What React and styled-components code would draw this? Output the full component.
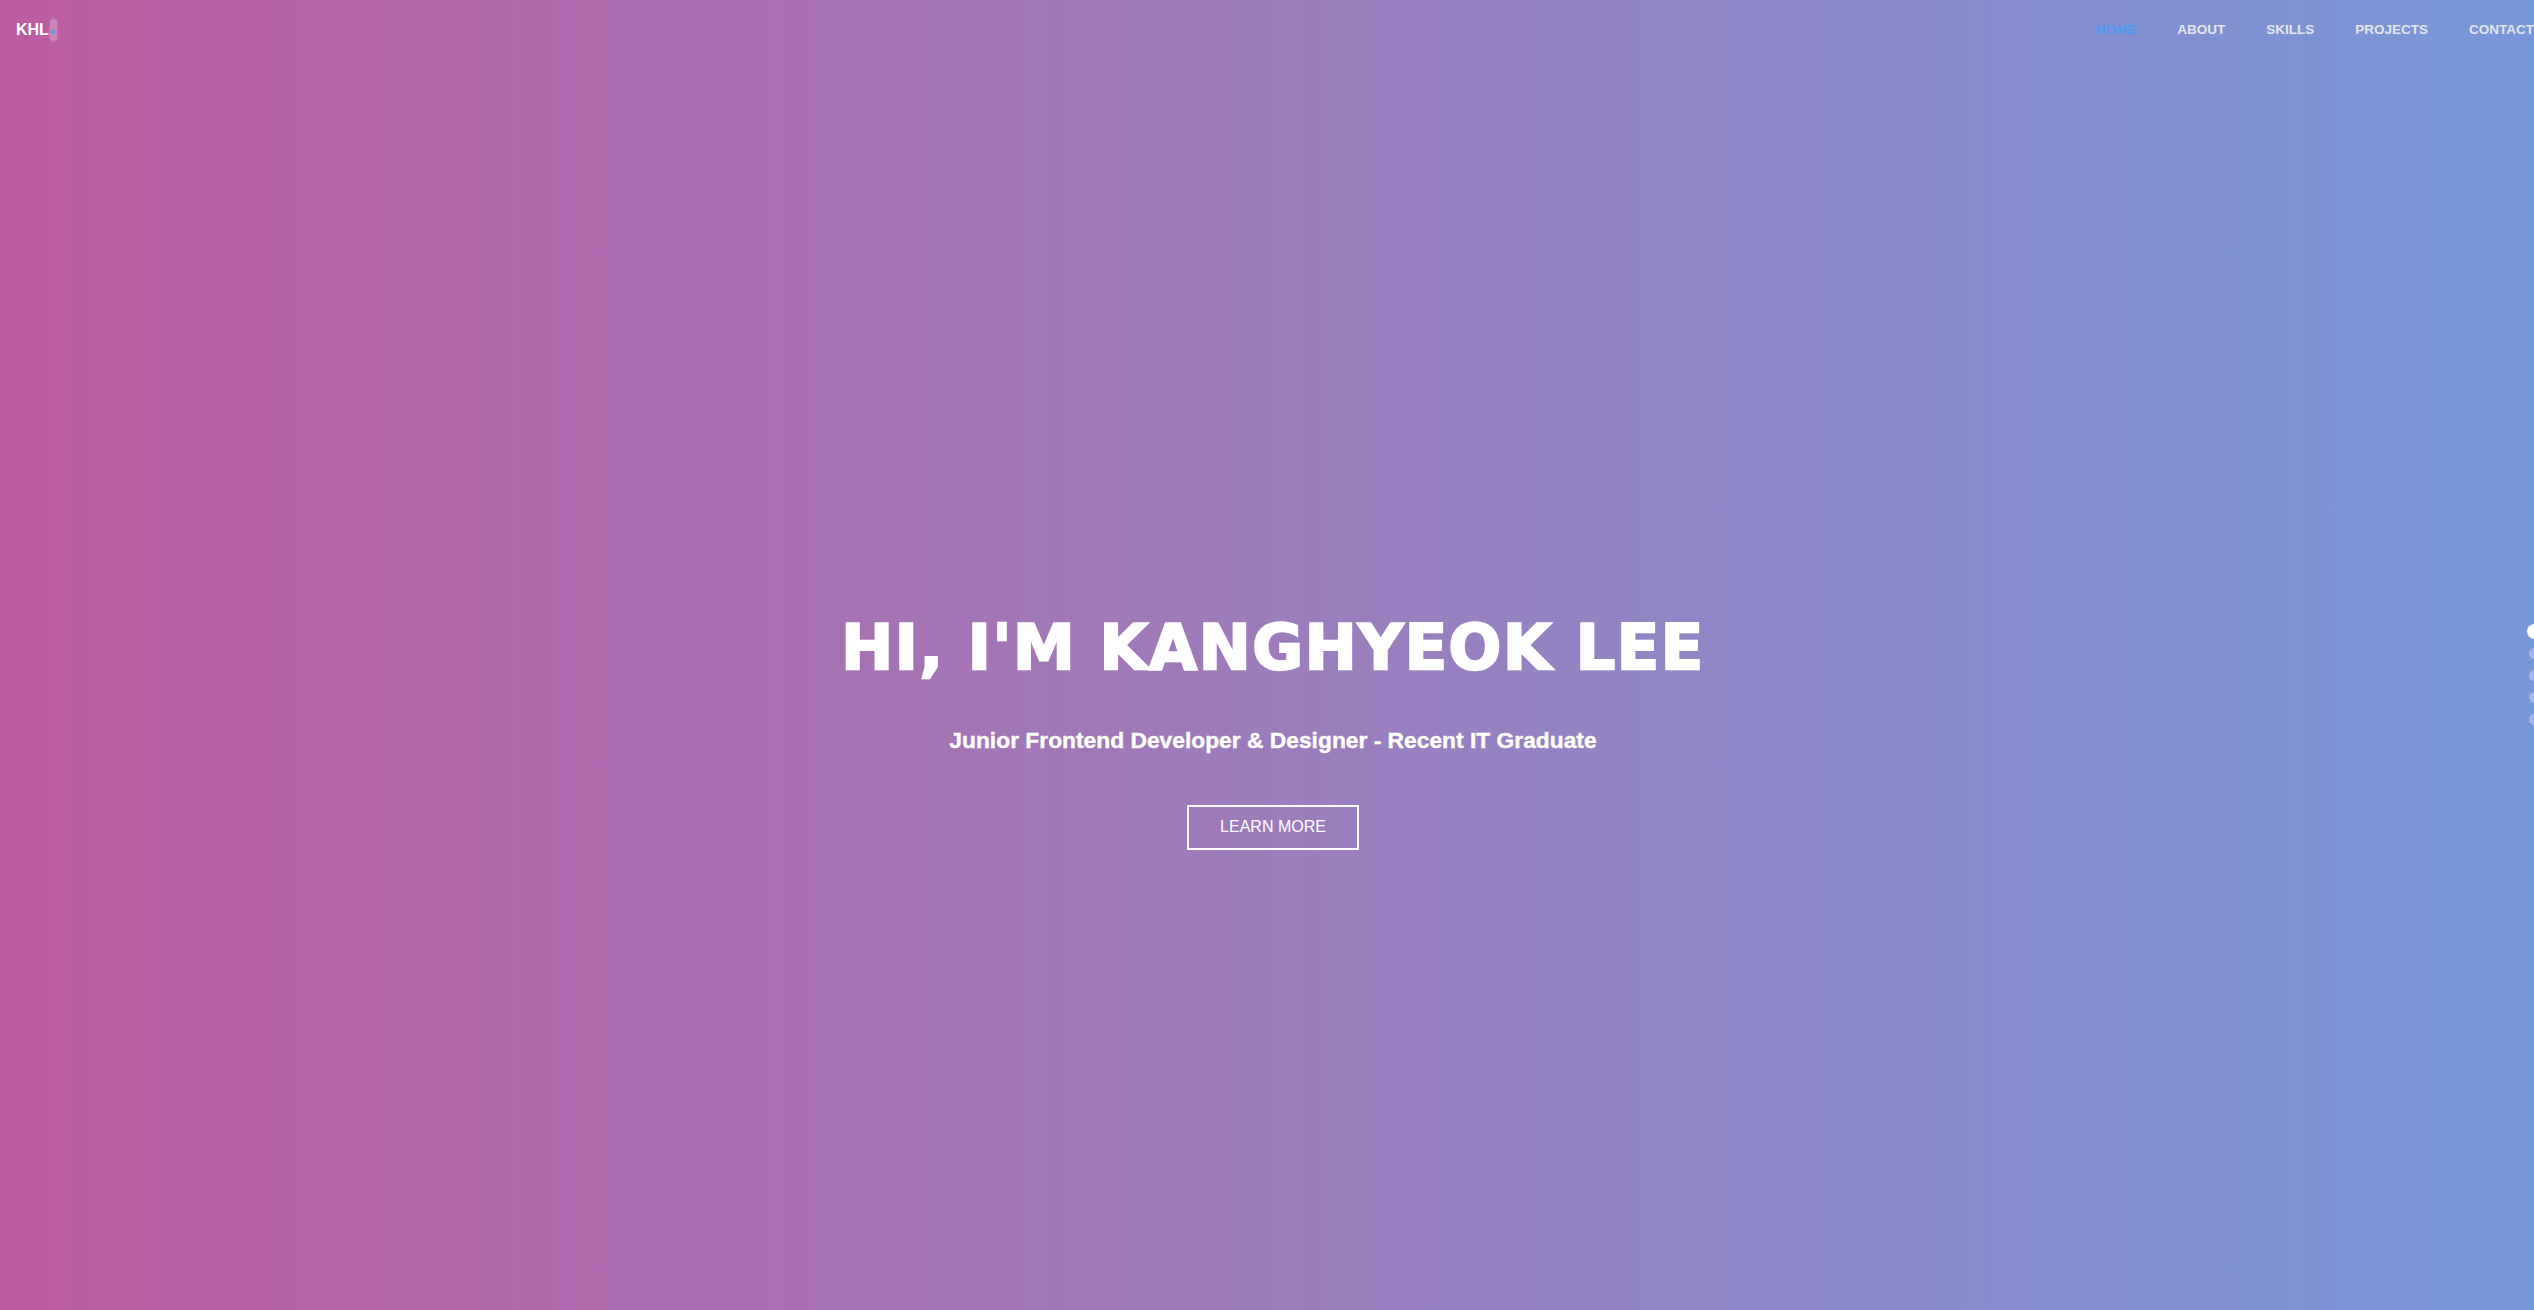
import React from 'react';
import styled, { createGlobalStyle } from 'styled-components';

const GlobalStyle = createGlobalStyle`
  html, body {
    margin: 0;
    padding: 0;
    overflow: hidden;
    font-family: 'Liberation Sans', Arial, sans-serif;
  }
  * {
    box-sizing: border-box;
  }
`;

const navItems = ['HOME', 'ABOUT', 'SKILLS', 'PROJECTS', 'CONTACT'];

const App = () => {
  return (
    <Page>
      <GlobalStyle />
      <Header>
        <Logo>
          KHL
          <Cursor>
            <CursorDot />
          </Cursor>
        </Logo>
        <Nav>
          {navItems.map((item, i) => (
            <NavLink key={item} active={i === 0}>
              {item}
            </NavLink>
          ))}
        </Nav>
      </Header>
      <Hero>
        <Title>HI, I'M KANGHYEOK LEE</Title>
        <Subtitle>Junior Frontend Developer &amp; Designer - Recent IT Graduate</Subtitle>
        <LearnMore>LEARN MORE</LearnMore>
        <Dots>
          {[0, 1, 2, 3, 4].map(i => (
            <DotSlot key={i}>
              <Dot current={i === 0} />
            </DotSlot>
          ))}
        </Dots>
      </Hero>
    </Page>
  );
};

const Page = styled.div`
  position: relative;
  width: 2546px;
  height: 1310px;
  background: linear-gradient(to right, #bc5ca2 0%, #9c7cbc 50%, #7699d8 100%);
  color: #fff;
`;

const Header = styled.header`
  position: absolute;
  top: 0;
  left: 0;
  right: 0;
  height: 58px;
  display: flex;
  align-items: center;
  justify-content: space-between;
  padding: 0 12px 0 16px;
  z-index: 2;
`;

const Logo = styled.div`
  display: flex;
  align-items: center;
  font-size: 16px;
  font-weight: 700;
  color: #fff;
  padding-top: 2px;
`;

const Cursor = styled.span`
  display: flex;
  align-items: center;
  justify-content: center;
  width: 7px;
  height: 22px;
  margin-left: 1px;
  margin-top: -1px;
  border-radius: 4px;
  background: rgba(255, 255, 255, 0.25);
  box-shadow: 0 0 3px rgba(255, 255, 255, 0.25);
`;

const CursorDot = styled.span`
  width: 4px;
  height: 4px;
  margin-top: 4px;
  border-radius: 50%;
  background: #4f9cf2;
`;

const Nav = styled.nav`
  display: flex;
  align-items: center;
  gap: 41px;
`;

const NavLink = styled.a`
  font-size: 13.5px;
  font-weight: 700;
  color: ${({ active }) => (active ? '#4a9bf2' : '#e4e4ee')};
  text-decoration: none;
  cursor: pointer;
`;

const Hero = styled.section`
  position: relative;
  height: 100%;
  display: flex;
  flex-direction: column;
  align-items: center;
  justify-content: center;
  padding-top: 150px;
`;

const Title = styled.h1`
  margin: 0;
  font-family: 'DejaVu Sans', 'Liberation Sans', sans-serif;
  font-size: 62px;
  font-weight: 700;
  letter-spacing: 1.6px;
  line-height: normal;
  color: #fff;
  -webkit-text-stroke: 2.4px #fff;
`;

const Subtitle = styled.h3`
  margin: 43px 0 0;
  font-family: 'Liberation Sans', Arial, sans-serif;
  font-size: 22.8px;
  font-weight: 700;
  line-height: normal;
  color: #fff;
  -webkit-text-stroke: 0.4px #fff;
`;

const LearnMore = styled.button`
  margin-top: 51px;
  width: 172px;
  height: 45px;
  display: flex;
  align-items: center;
  justify-content: center;
  border: 2px solid #fff;
  background: transparent;
  color: #fff;
  font-family: 'Liberation Sans', Arial, sans-serif;
  font-size: 16px;
  cursor: pointer;
`;

const Dots = styled.div`
  position: absolute;
  top: 620px;
  right: 4px;
  display: flex;
  flex-direction: column;
`;

const DotSlot = styled.div`
  width: 15px;
  height: 22px;
  display: flex;
  align-items: center;
  justify-content: center;
`;

const Dot = styled.span`
  width: ${({ current }) => (current ? '15px' : '11px')};
  height: ${({ current }) => (current ? '15px' : '11px')};
  border-radius: 50%;
  background: ${({ current }) => (current ? '#fff' : 'rgba(255, 255, 255, 0.3)')};
`;

export default App;
